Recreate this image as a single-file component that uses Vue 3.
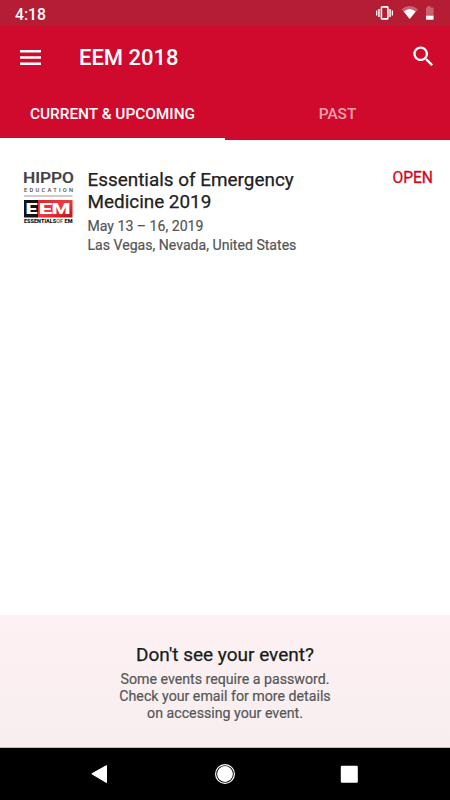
<template>
  <div class="screen">
    <header class="header">
      <div class="status-bar">
        <span class="clock">4:18</span>
        <svg class="status-icons" width="60" height="26" viewBox="0 0 60 26" fill="#fff">
          <path d="M1 10.5h1.3v5H1zM3.2 9h1.5v8H3.2zM14.3 9h1.5v8h-1.5zM16.7 10.5H18v5h-1.3z" />
          <rect x="6.4" y="6.9" width="6.5" height="12" rx=".7" fill="none" stroke="#fff" stroke-width="1.6" />
          <path d="M26.5 9.2Q34.7 3 43 9.2L34.7 19z" opacity=".3" />
          <path d="M28.8 11.5Q34.7 6.4 40.7 11.5L34.7 19z" />
          <path d="M52.3 6h3v1.4h2.5c.5 0 .8.3.8.8V16H51V8.2c0-.5.3-.8.8-.8h.5z" opacity=".3" />
          <path d="M51 15.8h7.6V19c0 .5-.3.8-.8.8h-6c-.5 0-.8-.3-.8-.8z" />
        </svg>
      </div>
      <div class="toolbar">
        <svg class="menu-icon" width="21" height="15" viewBox="0 0 21 15" fill="#fff">
          <path d="M0 0h21v2.5H0zM0 6.3h21v2.5H0zM0 12.5h21V15H0z" />
        </svg>
        <h1 class="title">EEM 2018</h1>
        <svg class="search-icon" width="27" height="27" viewBox="0 0 24 24" fill="#fff">
          <path d="M15.5 14h-.79l-.28-.27C15.41 12.59 16 11.11 16 9.5 16 5.91 13.09 3 9.5 3S3 5.91 3 9.5 5.91 16 9.5 16c1.61 0 3.09-.59 4.23-1.57l.27.28v.79l5 4.99L20.49 19l-4.99-5zm-6 0C7.01 14 5 11.99 5 9.5S7.01 5 9.5 5 14 7.01 14 9.5 11.99 14 9.5 14z" />
        </svg>
      </div>
      <nav class="tabs">
        <div
          v-for="(tab, index) in tabs"
          :key="tab"
          class="tab"
          :class="{ active: index === activeTab }"
          @click="activeTab = index"
        >
          <span>{{ tab }}</span>
        </div>
      </nav>
    </header>

    <main class="events">
      <div v-for="event in events" :key="event.name" class="event">
        <svg class="logo" width="52" height="56" viewBox="0 0 52 56">
          <defs>
            <linearGradient id="logo-red" x1="0" x2="1" y1="0" y2="1">
              <stop offset="0" stop-color="#e3242b" />
              <stop offset=".5" stop-color="#f0383d" />
              <stop offset="1" stop-color="#b3131b" />
            </linearGradient>
          </defs>
          <text class="logo-hippo" x="0" y="14.2" textLength="51" lengthAdjust="spacingAndGlyphs">HIPPO</text>
          <text class="logo-education" x="1" y="22.9" textLength="49">EDUCATION</text>
          <rect x="1" y="26.5" width="48.5" height="1" fill="#999" />
          <rect x="1" y="31" width="14" height="17.5" fill="#171313" />
          <rect x="15" y="31" width="34.5" height="17.5" fill="url(#logo-red)" />
          <text class="logo-eem" x="2.5" y="45.2" textLength="12" lengthAdjust="spacingAndGlyphs">E</text>
          <text class="logo-eem" x="15.7" y="45.2" textLength="13.5" lengthAdjust="spacingAndGlyphs">E</text>
          <text class="logo-eem" x="28.5" y="45.2" textLength="19" lengthAdjust="spacingAndGlyphs">M</text>
          <text class="logo-sub" x="1" y="53.5" textLength="48.5" lengthAdjust="spacingAndGlyphs">ESSENTIALS<tspan class="thin">OF</tspan> EM</text>
        </svg>
        <div class="event-info">
          <h2 class="event-name">{{ event.name }}</h2>
          <p class="event-date">{{ event.date }}</p>
          <p class="event-place">{{ event.place }}</p>
        </div>
        <span class="event-action">OPEN</span>
      </div>
    </main>

    <section class="hint">
      <h3 class="hint-title">Don't see your event?</h3>
      <p>Some events require a password.</p>
      <p>Check your email for more details</p>
      <p>on accessing your event.</p>
    </section>

    <footer class="nav-bar">
      <svg width="22" height="22" viewBox="0 0 22 22">
        <path d="M2.8 10.8 17.5 2.6v17z" fill="#fff" stroke="#fff" stroke-width="1" stroke-linejoin="round" />
      </svg>
      <svg width="22" height="22" viewBox="0 0 22 22">
        <circle cx="11" cy="11" r="9.4" fill="none" stroke="#fff" stroke-width="1.2" />
        <circle cx="11" cy="11" r="7.9" fill="#fff" />
      </svg>
      <svg width="22" height="22" viewBox="0 0 22 22">
        <rect x="2.8" y="2.8" width="17" height="17" rx="1.2" fill="#fff" />
      </svg>
    </footer>
  </div>
</template>

<script setup>
import { ref } from 'vue';

const tabs = ['CURRENT & UPCOMING', 'PAST'];
const activeTab = ref(0);

const events = ref([
  {
    name: 'Essentials of Emergency Medicine 2019',
    date: 'May 13 – 16, 2019',
    place: 'Las Vegas, Nevada, United States',
  },
]);
</script>

<style>
body {
  margin: 0;
}
</style>

<style scoped>
.screen {
  display: flex;
  flex-direction: column;
  width: 450px;
  height: 800px;
  overflow: hidden;
  background: #fff;
  font-family: Roboto, 'Liberation Sans', sans-serif;
}

h1,
h2,
h3,
p {
  margin: 0;
  font-weight: 400;
}

.header {
  flex: none;
  background: #d00a2c;
  color: #fff;
}

.status-bar {
  display: flex;
  justify-content: space-between;
  height: 26px;
  padding: 0 15px;
  background: #b41d34;
}

.clock {
  font-size: 15.7px;
  font-weight: 500;
  line-height: 29px;
}

.toolbar {
  display: flex;
  align-items: center;
  height: 62px;
  padding: 0 13px 0 20px;
}

.title {
  flex: 1;
  margin-left: 38px;
  font-size: 22px;
  font-weight: 500;
  line-height: 30px;
  padding-top: 2px;
}

.search-icon {
  margin-bottom: 2px;
}

.tabs {
  display: flex;
  height: 52px;
}

.tab {
  box-sizing: border-box;
  width: 225px;
  border-bottom: 2px solid transparent;
  text-align: center;
  font-size: 15.4px;
  font-weight: 500;
  line-height: 53px;
  color: #f0a1ae;
  cursor: pointer;
}

.tab.active {
  color: #fff;
  border-bottom-color: #fff;
}

.events {
  flex: 1;
}

.event {
  display: flex;
  align-items: flex-start;
  padding: 29px 17px 0 23px;
}

.event-info {
  flex: 1;
  margin-left: 12.5px;
}

.event-name {
  width: 230px;
  font-size: 18.9px;
  line-height: 22px;
  color: #212121;
  -webkit-text-stroke: 0.25px #212121;
}

.event-date,
.event-place {
  font-size: 14.1px;
  line-height: 19px;
  color: #555;
  -webkit-text-stroke: 0.2px #555;
}

.event-date {
  padding-top: 4px;
}

.event-action {
  font-size: 15.6px;
  line-height: 18px;
  color: #cc0b1f;
  -webkit-text-stroke: 0.35px #cc0b1f;
}

.logo {
  flex: none;
}

.logo-hippo {
  font: 500 15px Roboto, sans-serif;
  fill: #414042;
  stroke: #414042;
  stroke-width: 0.2;
}

.logo-education {
  font: 500 5.7px Roboto, sans-serif;
  fill: #4a4a4a;
}

.logo-eem {
  font: 900 15px Roboto, sans-serif;
  fill: #fff;
}

.logo-sub {
  font: 900 5.6px Roboto, sans-serif;
  fill: #111;
}

.thin {
  font-weight: 400;
}

.hint {
  box-sizing: border-box;
  height: 133px;
  padding-top: 29px;
  border-bottom: 1px solid #c3b8ba;
  background: linear-gradient(#fdf1f3, #f8eeef);
  text-align: center;
  color: #555857;
  font-size: 14.2px;
  line-height: 17px;
  -webkit-text-stroke: 0.2px #555857;
}

.hint-title {
  margin-bottom: 5px;
  font-size: 19px;
  line-height: 22px;
  color: #171c1b;
  -webkit-text-stroke: 0.25px #171c1b;
}

.nav-bar {
  display: flex;
  flex: none;
  align-items: center;
  justify-content: space-between;
  box-sizing: border-box;
  height: 52px;
  padding: 0 90px 0 89px;
  background: #000;
}
</style>
